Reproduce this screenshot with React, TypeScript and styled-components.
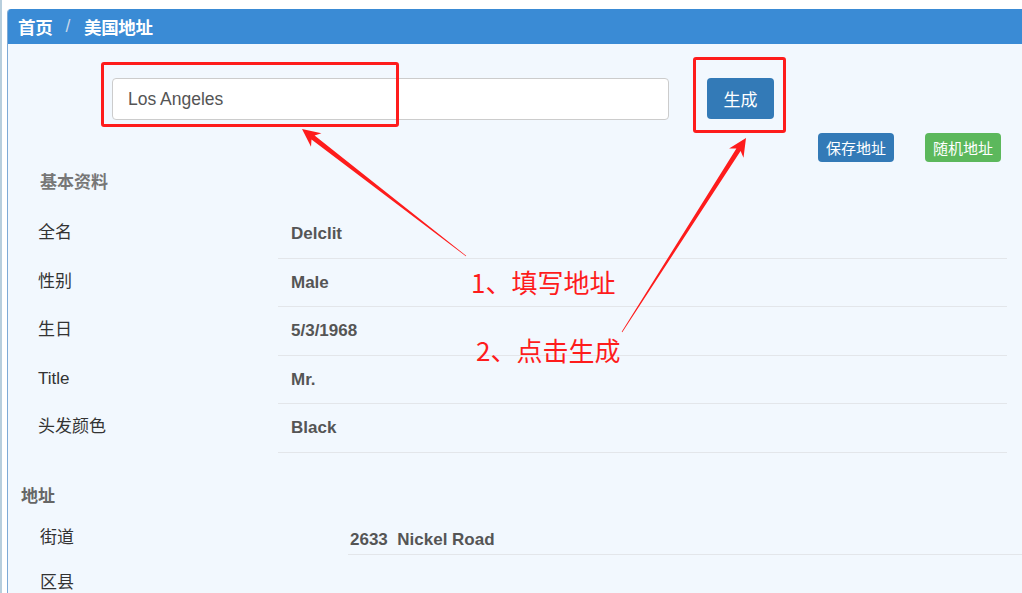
import React from "react";
import styled, { createGlobalStyle } from "styled-components";

const Global = createGlobalStyle`
  html, body { margin: 0; padding: 0; background: #fff; }
  body { width: 1022px; height: 593px; overflow: hidden; font-family: "Liberation Sans", "Noto Sans CJK SC", sans-serif; }
`;

const Page = styled.div`
  position: relative;
  width: 1022px;
  height: 593px;
  overflow: hidden;
  box-sizing: border-box;
  padding: 9px 0 0 7px;
  background: linear-gradient(to right, #b7cedd 0 2px, #ffffff 2px);
`;

const Panel = styled.div`
  width: 1040px;
  height: 620px;
  border-left: 1px solid #7eaad6;
  border-top-left-radius: 4px;
  background: #f2f8fe;
  overflow: hidden;
`;

const Header = styled.div`
  height: 35px;
  background: #3a8bd5;
  display: flex;
  align-items: center;
  padding-left: 10px;
  color: #fff;
  font-weight: bold;
  font-size: 17.5px;
  font-family: "Noto Sans CJK SC", sans-serif;
  letter-spacing: -0.3px;
`;

const Sep = styled.span`
  color: #c8d8ea;
  font-weight: normal;
  margin: 0 14px 0 13px;
  font-family: "Liberation Sans", sans-serif;
`;

const Body = styled.div`
  width: 1014px;
`;

const SearchRow = styled.div`
  display: flex;
  align-items: flex-start;
  margin-top: 34px;
  padding-left: 104px;
  gap: 38px;
`;

const Input = styled.div`
  width: 557px;
  height: 42px;
  box-sizing: border-box;
  border: 1px solid #ccc;
  border-radius: 4px;
  background: #fff;
  display: flex;
  align-items: center;
  padding-left: 15px;
  font-size: 17.5px;
  color: #555;
`;

const Btn = styled.div<{ $bg: string; $w: number; $h: number; $fs: number }>`
  width: ${(p) => p.$w}px;
  height: ${(p) => p.$h}px;
  background: ${(p) => p.$bg};
  border-radius: 4px;
  color: #fff;
  display: flex;
  align-items: center;
  justify-content: center;
  font-size: ${(p) => p.$fs}px;
  font-family: "Noto Sans CJK SC", sans-serif;
`;

const ActionRow = styled.div`
  display: flex;
  justify-content: flex-end;
  gap: 31px;
  margin-top: 13px;
  padding-right: 21px;
`;

const SectionTitle = styled.div<{ $left: number; $h: number; $color: string }>`
  height: ${(p) => p.$h}px;
  line-height: ${(p) => p.$h}px;
  padding-left: ${(p) => p.$left}px;
  font-weight: bold;
  font-size: 17px;
  color: ${(p) => p.$color};
  font-family: "Noto Sans CJK SC", sans-serif;
`;

const Table = styled.div<{ $cols: string; $mt: number; $mr: number }>`
  display: grid;
  grid-template-columns: ${(p) => p.$cols};
  margin-top: ${(p) => p.$mt}px;
  margin-right: ${(p) => p.$mr}px;
`;

const Label = styled.div<{ $h: number; $pl: number; $pt: number }>`
  height: ${(p) => p.$h}px;
  box-sizing: border-box;
  padding-left: ${(p) => p.$pl}px;
  padding-top: ${(p) => p.$pt}px;
  font-size: 17px;
  color: #333;
  font-family: "Liberation Sans", "Noto Sans CJK SC", sans-serif;
  line-height: 20px;
`;

const Value = styled.div<{ $h: number; $pl: number; $pt: number }>`
  height: ${(p) => p.$h}px;
  box-sizing: border-box;
  padding-left: ${(p) => p.$pl}px;
  padding-top: ${(p) => p.$pt}px;
  border-bottom: 1px solid #e3e6ea;
  font-size: 17px;
  font-weight: bold;
  color: #555;
  line-height: 20px;
  white-space: pre;
`;

const Mark = styled.div<{ $x: number; $y: number; $w: number; $h: number }>`
  position: absolute;
  left: ${(p) => p.$x}px;
  top: ${(p) => p.$y}px;
  width: ${(p) => p.$w}px;
  height: ${(p) => p.$h}px;
  box-sizing: border-box;
  border: 3px solid #fe1c1c;
  border-radius: 3px;
`;

const Note = styled.div<{ $x: number; $y: number }>`
  position: absolute;
  left: ${(p) => p.$x}px;
  top: ${(p) => p.$y}px;
  font-size: 26px;
  line-height: 30px;
  color: #fe1c1c;
  font-family: "Noto Sans CJK SC", sans-serif;
  white-space: nowrap;
`;

const Overlay = styled.svg`
  position: absolute;
  left: 0;
  top: 0;
  pointer-events: none;
`;

function arrowPoints(sx: number, sy: number, tx: number, ty: number) {
  const dx = tx - sx;
  const dy = ty - sy;
  const len = Math.hypot(dx, dy);
  const ux = dx / len;
  const uy = dy / len;
  const nx = -uy;
  const ny = ux;
  const headLen = 18;
  const headW = 17;
  const shaftW = 5;
  const bx = tx - ux * headLen;
  const by = ty - uy * headLen;
  const nbx = tx - ux * (headLen - 4);
  const nby = ty - uy * (headLen - 4);
  const pts: [number, number][] = [
    [sx + nx * 0.3, sy + ny * 0.3],
    [nbx + (nx * shaftW) / 2, nby + (ny * shaftW) / 2],
    [bx + (nx * headW) / 2, by + (ny * headW) / 2],
    [tx, ty],
    [bx - (nx * headW) / 2, by - (ny * headW) / 2],
    [nbx - (nx * shaftW) / 2, nby - (ny * shaftW) / 2],
    [sx - nx * 0.3, sy - ny * 0.3],
  ];
  return pts.map((p) => p.map((v) => v.toFixed(1)).join(",")).join(" ");
}

const basic = [
  ["全名", "Delclit"],
  ["性别", "Male"],
  ["生日", "5/3/1968"],
  ["Title", "Mr."],
  ["头发颜色", "Black"],
];

const address = [
  ["街道", "2633  Nickel Road"],
  ["区县", ""],
];

export default function App() {
  return (
    <>
      <Global />
      <Page>
        <Panel>
          <Header>
            首页<Sep>/</Sep>美国地址
          </Header>
          <Body>
            <SearchRow>
              <Input>Los Angeles</Input>
              <Btn $bg="#337ab7" $w={67} $h={41} $fs={17}>生成</Btn>
            </SearchRow>
            <ActionRow>
              <Btn $bg="#337ab7" $w={76} $h={29} $fs={15}>保存地址</Btn>
              <Btn $bg="#5cb85c" $w={76} $h={29} $fs={15}>随机地址</Btn>
            </ActionRow>
            <SectionTitle $left={32} $h={38} $color="#777">基本资料</SectionTitle>
            <Table $cols="30px 240px 1fr" $mt={10} $mr={15}>
              {basic.map(([k, v]) => (
                <React.Fragment key={k}>
                  <div />
                  <Label $h={48.5} $pl={0} $pt={13}>{k}</Label>
                  <Value $h={48.5} $pl={13} $pt={14}>{v}</Value>
                </React.Fragment>
              ))}
            </Table>
            <SectionTitle $left={13} $h={30} $color="#666" style={{ marginTop: 27.5 }}>地址</SectionTitle>
            <Table $cols="32px 308px 1fr" $mt={0} $mr={-40}>
              {address.map(([k, v]) => (
                <React.Fragment key={k}>
                  <div />
                  <Label $h={45} $pl={0} $pt={18}>{k}</Label>
                  <Value $h={45} $pl={2} $pt={20}>{v}</Value>
                </React.Fragment>
              ))}
            </Table>
          </Body>
        </Panel>
        <Mark $x={101} $y={62} $w={298} $h={65} />
        <Mark $x={693} $y={57} $w={93} $h={76} />
        <Overlay width={1022} height={593} viewBox="0 0 1022 593">
          <polygon points={arrowPoints(466, 256, 302, 129)} fill="#fe1c1c" />
          <polygon points={arrowPoints(622, 332, 746, 138)} fill="#fe1c1c" />
        </Overlay>
        <Note $x={471} $y={267}>1、填写地址</Note>
        <Note $x={476} $y={335}>2、点击生成</Note>
      </Page>
    </>
  );
}
